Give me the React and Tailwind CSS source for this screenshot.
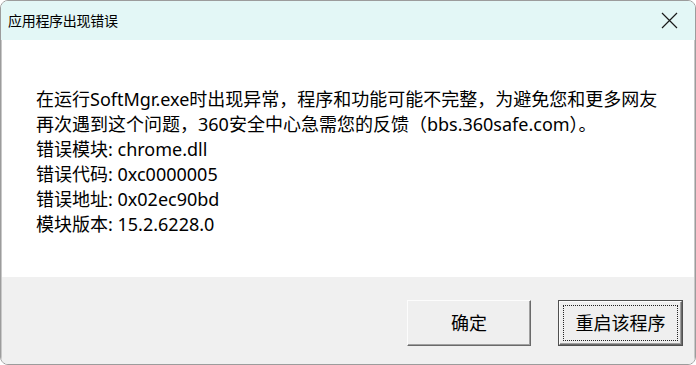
import React from "react";

const FONT = { fontFamily: '"Noto Sans", "Noto Sans CJK SC", sans-serif' };

const lines = [
  "在运行SoftMgr.exe时出现异常，程序和功能可能不完整，为避免您和更多网友",
  "再次遇到这个问题，360安全中心急需您的反馈（bbs.360safe.com）。",
  "错误模块: chrome.dll",
  "错误代码: 0xc0000005",
  "错误地址: 0x02ec90bd",
  "模块版本: 15.2.6228.0",
];

function CloseIcon() {
  return (
    <svg width="17" height="17" viewBox="0 0 17 17" fill="none">
      <path d="M1 1 L16 16 M16 1 L1 16" stroke="#1a1a1a" strokeWidth="1.2" />
    </svg>
  );
}

export default function App() {
  return (
    <div className="w-[696px] h-[365px] bg-white" style={FONT}>
      <div className="flex flex-col w-full h-full border border-[#9c9c9c] rounded-[8px] overflow-hidden">
        {/* title bar */}
        <div className="flex items-center justify-between h-[39px] bg-[#e3f7f6] pl-[7px] pr-[17px]">
          <span className="text-[14px] text-black tracking-[-0.3px]">应用程序出现错误</span>
          <CloseIcon />
        </div>

        {/* message */}
        <div className="flex-1 bg-white pl-[34px] pt-[47px] border-l border-r border-[#c8c8c8]">
          {lines.map((t, i) => (
            <div key={i} className="text-[18px] leading-[25px] text-black whitespace-nowrap">
              {t}
            </div>
          ))}
        </div>

        {/* footer */}
        <div className="flex justify-end items-start gap-[27px] h-[87px] bg-[#f0f0f0] pt-[23px] pr-[11px] border-l border-r border-[#c8c8c8]">
          <button className="w-[124px] h-[46px] bg-[#efefef] border border-t-[#fcfcfc] border-l-[#fcfcfc] border-b-[#6a6a6a] border-r-[#6a6a6a] shadow-[inset_-1px_-1px_0_#a0a0a0] text-[18px] text-black">
            确定
          </button>
          <button className="w-[125px] h-[46px] border border-[#505050] bg-[#efefef]">
            <div className="w-full h-full border border-t-[#fcfcfc] border-l-[#fcfcfc] border-b-[#6a6a6a] border-r-[#6a6a6a] shadow-[inset_-1px_-1px_0_#a0a0a0] p-[3px]">
              <div className="w-full h-full border border-dotted border-[#222] flex items-center justify-center text-[18px] text-black">
                重启该程序
              </div>
            </div>
          </button>
        </div>
      </div>
    </div>
  );
}
